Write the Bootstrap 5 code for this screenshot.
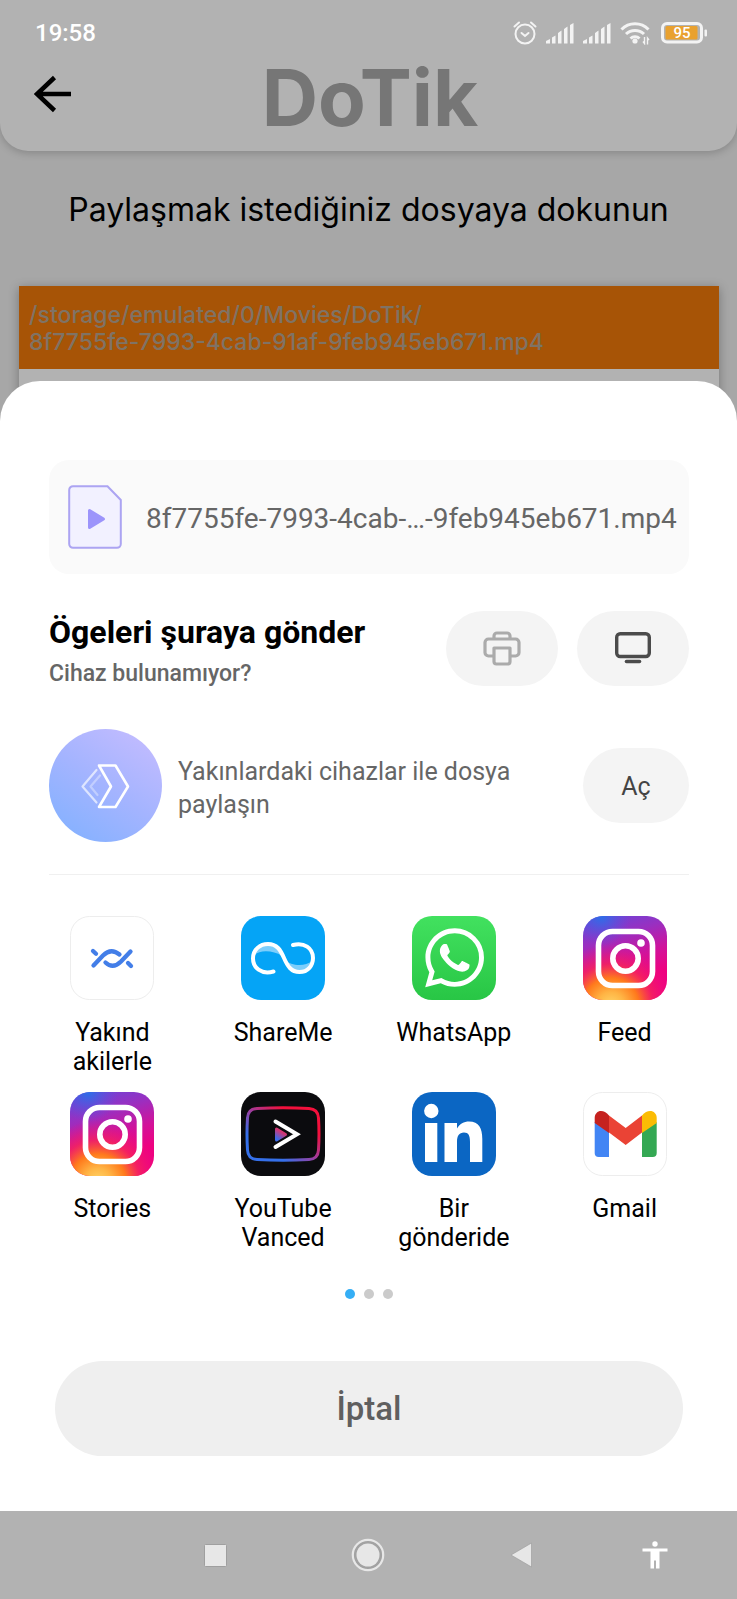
<!DOCTYPE html>
<html lang="tr">
<head>
<meta charset="utf-8">
<meta name="viewport" content="width=device-width, initial-scale=1">
<title>DoTik</title>
<link rel="stylesheet" href="https://cdn.jsdelivr.net/npm/bootstrap@5.3.0/dist/css/bootstrap.min.css">
<style>
  body { font-family: Roboto, "Liberation Sans", sans-serif; background: #a7a7a7; color: #000; }
  svg { display: block; flex-shrink: 0; }
  button { border: 0; padding: 0; }
  .app-head { background: #b2b2b2; border-radius: 0 0 28px 28px; box-shadow: 0 2px 8px rgba(0,0,0,.2); height: 151px; }
  .status { height: 66px; padding: 0 28px 0 35px; color: #fff; font-size: 24px; font-weight: 500; line-height: 28px; }
  .status-icons { gap: 9px; }
  .title-row { display: grid; grid-template-columns: 1fr auto 1fr; padding: 0 31px 0 34px; }
  .back { height: 56px; }
  .brand { font-family: Inter, "Noto Sans", sans-serif; font-weight: 700; font-size: 78px; line-height: 64px; color: #767676; }
  .hint { font-family: Inter, "Noto Sans", sans-serif; font-size: 32px; line-height: 42px; padding: 38px 20px 55px; }
  .file-card { margin: 0 18px 0 19px; background: #b2b2b2; box-shadow: 0 2px 10px rgba(0,0,0,.3); padding-bottom: 62px; }
  .file-path { background: #a75406; color: #7f7365; font-family: Inter, "Noto Sans", sans-serif; font-weight: 500; font-size: 23px; line-height: 27px; padding: 16px 10px 13px; }
  .sheet { background: #fff; border-radius: 40px 40px 0 0; margin-top: -50px; padding: 79px 0 55px; z-index: 1; }
  .inset { margin-left: 49px; margin-right: 48px; }
  .file-box { background: #fafafa; border-radius: 20px; height: 114px; padding: 0 14px 0 19px; font-size: 28px; color: #666; }
  .file-box span { padding-top: 4px; }
  .send-row { margin-top: 34px; gap: 19px; }
  .send-title { font-size: 32px; line-height: 48px; font-weight: 700; }
  .send-sub { font-size: 23px; line-height: 28px; margin-top: 4px; font-weight: 500; color: #666; }
  .pill { background: #f4f4f4; border-radius: 38px; height: 75px; color: #444; font-size: 25px; }
  .w-icon { width: 112px; }
  .w-open { width: 106px; padding-top: 2px; }
  .near { margin-top: 41px; font-size: 25px; line-height: 33px; color: #666; }
  .near-logo { width: 113px; height: 113px; border-radius: 50%; background: linear-gradient(35deg, #82b1ff 5%, #a4b4ff 50%, #c5bcff 95%); }
  .rule { height: 1px; background: #f0f0f0; margin-top: 32px; margin-bottom: 41px; }
  .apps { display: grid; grid-template-columns: repeat(4, 1fr); row-gap: 16px; margin: 0 27px; }
  .app { background: none; color: #000; font-size: 25px; line-height: 29px; gap: 18px; min-height: 160px; }
  .dots { padding-top: 37px; gap: 9px; }
  .dot { width: 10px; height: 10px; border-radius: 50%; background: #cbcbcb; }
  .dot.on { background: #35aef5; }
  .cancel { background: #efefef; border-radius: 48px; height: 95px; margin: 62px 54px 0 55px; font-size: 33px; font-weight: 500; color: #5f5f5f; }
  .nav-keys { background: #b2b2b2; height: 88px; display: grid; grid-template-columns: 10fr 11fr 11fr 11fr 10fr; }
  .nav-keys button { background: none; }
</style>
</head>
<body>
<svg width="0" height="0" class="position-absolute" aria-hidden="true">
  <defs>
    <radialGradient id="igWarm" gradientUnits="userSpaceOnUse" cx="28" cy="90" r="62">
      <stop offset="0" stop-color="#ffd76a"/><stop offset=".22" stop-color="#ffb545"/><stop offset=".45" stop-color="#ff7a1c"/><stop offset=".68" stop-color="#f5245c" stop-opacity=".8"/><stop offset="1" stop-color="#f0107c" stop-opacity="0"/>
    </radialGradient>
    <linearGradient id="igCool" x1=".2" y1="0" x2=".45" y2=".8">
      <stop offset="0" stop-color="#6a45d8"/><stop offset=".35" stop-color="#9a2fc0"/><stop offset=".7" stop-color="#d2129a"/><stop offset="1" stop-color="#ee0280"/>
    </linearGradient>
    <radialGradient id="igBlue" gradientUnits="userSpaceOnUse" cx="18" cy="0" r="30">
      <stop offset="0" stop-color="#2a70e8"/><stop offset="1" stop-color="#5a50e0" stop-opacity="0"/>
    </radialGradient>
    <linearGradient id="waGreen" x1="0" y1="0" x2="0" y2="1"><stop offset="0" stop-color="#42e15f"/><stop offset="1" stop-color="#28c645"/></linearGradient>
    <linearGradient id="ytEdge" x1="0" y1="1" x2="1" y2="0"><stop offset=".25" stop-color="#3570ea"/><stop offset=".5" stop-color="#a03c9c"/><stop offset=".75" stop-color="#f3103c"/></linearGradient>
    <linearGradient id="ytPlay" x1="0" y1="1" x2=".5" y2="0"><stop offset=".1" stop-color="#3a6bea"/><stop offset=".8" stop-color="#d23774"/></linearGradient>
  </defs>
  <symbol id="instagram" viewBox="0 0 84 84">
    <rect width="84" height="84" rx="20" fill="url(#igCool)"/>
    <rect width="84" height="84" rx="20" fill="url(#igBlue)"/>
    <rect width="84" height="84" rx="20" fill="url(#igWarm)"/>
    <g fill="none" stroke="#fff" stroke-width="5.6"><rect x="15.500" y="15.500" width="54" height="54" rx="14"/><circle cx="42.500" cy="42.500" r="12.700"/></g>
    <circle cx="58" cy="27" r="3.800" fill="#fff"/>
  </symbol>
  <symbol id="signal" viewBox="0 0 28 22"><path d="M0 21.500v-2.500l4-2v4.500zM6 15.500l3.500-2v8H6zM12 11l3.500-2.500v13H12zM18 7l3.500-2.500v17H18zM24 3l3.500-2v20.500H24z"/></symbol>
</svg>

<div class="d-flex flex-column min-vh-100">
  <header class="app-head">
    <div class="status d-flex align-items-center justify-content-between">
      <span>19:58</span>
      <div class="status-icons d-flex align-items-center" aria-hidden="true">
        <svg width="24" height="24" viewBox="0 0 24 24" fill="none" stroke="#f3f3f3" stroke-width="2" stroke-linecap="round"><circle cx="12" cy="13" r="9.500"/><path d="M8.500 12l3.500 3 3.500-3M1.500 5.500L6 1.500M22.500 5.500L18 1.500"/></svg>
        <svg width="28" height="22" fill="#f3f3f3"><use href="#signal"/></svg>
        <svg width="28" height="22" fill="#f3f3f3"><use href="#signal"/></svg>
        <svg width="32" height="24" viewBox="0 0 32 24"><g fill="none" stroke="#f3f3f3" stroke-width="3"><path d="M1.500 8.500a18.500 18.500 0 0 1 27 0M6 13a13 13 0 0 1 18 0M10.500 17.500a6.500 6.500 0 0 1 9 0"/></g><circle cx="15" cy="20" r="2.600" fill="#f3f3f3"/><path d="M24.500 16v6.500l-1.500-2M27.500 23.500V17l1.500 2" fill="none" stroke="#f3f3f3" stroke-width="1.400"/></svg>
        <svg width="48" height="22" viewBox="0 0 48 22"><rect x="1.500" y="1.500" width="39" height="18.500" rx="4.500" fill="none" stroke="#f3f3f3" stroke-width="3"/><rect x="4.500" y="4" width="32" height="13.500" rx="1.500" fill="#e9a12f"/><rect x="43.500" y="7.500" width="2.500" height="7" rx="1" fill="#f3f3f3"/><text x="21" y="16" text-anchor="middle" font-size="15" font-weight="500" fill="#fff">95</text></svg>
      </div>
    </div>
    <div class="title-row align-items-start">
      <button class="back bg-transparent d-flex align-items-center" aria-label="Geri"><svg width="38" height="38" viewBox="0 0 38 38" fill="none" stroke="#000" stroke-width="4.500"><path d="M37 19H3M20.500 2.500L3 19l17.500 16.500"/></svg></button>
      <h1 class="brand mb-0">DoTik</h1>
    </div>
  </header>

  <main class="flex-grow-1 d-flex flex-column">
    <p class="hint m-0 text-center">Paylaşmak istediğiniz dosyaya dokunun</p>
    <div class="file-card"><div class="file-path">/storage/emulated/0/Movies/DoTik/<br>8f7755fe-7993-4cab-91af-9feb945eb671.mp4</div></div>

    <section class="sheet position-relative flex-grow-1 d-flex flex-column" aria-label="Paylaş">
      <div class="inset file-box d-flex align-items-center">
        <svg width="54" height="64" viewBox="0 0 54 64"><path d="M5 1.200h34.500L52.800 15v44a3.800 3.800 0 0 1-3.800 3.800H5A3.800 3.800 0 0 1 1.200 59V5A3.800 3.800 0 0 1 5 1.200z" fill="#f2f1ff" stroke="#aca4f2" stroke-width="2"/><path d="M21.500 25.500v17l14-8.500z" fill="#9c94fb" stroke="#9c94fb" stroke-width="3" stroke-linejoin="round"/></svg>
        <span class="ms-4 text-nowrap">8f7755fe-7993-4cab-…-9feb945eb671.mp4</span>
      </div>

      <div class="inset send-row d-flex align-items-center">
        <div class="me-auto">
          <h2 class="send-title m-0">Ögeleri şuraya gönder</h2>
          <p class="send-sub mb-0">Cihaz bulunamıyor?</p>
        </div>
        <button class="pill w-icon d-flex align-items-center justify-content-center" aria-label="Yazdır"><svg width="38" height="35" viewBox="0 0 38 35" fill="none" stroke="#ababab" stroke-width="3.200" stroke-linejoin="round"><path d="M11 8V5a3 3 0 0 1 3-3h10a3 3 0 0 1 3 3v3M11 25H5.500a3.500 3.500 0 0 1-3.500-3.500v-10A3.500 3.500 0 0 1 5.500 8h27a3.500 3.500 0 0 1 3.500 3.500v10a3.500 3.500 0 0 1-3.500 3.500H27"/><path d="M11 17h16v13.500a2.500 2.500 0 0 1-2.500 2.500h-11a2.500 2.500 0 0 1-2.500-2.500z"/></svg></button>
        <button class="pill w-icon d-flex align-items-center justify-content-center" aria-label="Ekrana yansıt"><svg width="36" height="32" viewBox="0 0 36 32"><rect x="1.700" y="1.700" width="32.600" height="22.800" rx="3.500" fill="none" stroke="#4b4b4b" stroke-width="3.400"/><path d="M11.500 29.500h13" stroke="#4b4b4b" stroke-width="3.600" stroke-linecap="round"/></svg></button>
      </div>

      <div class="inset near d-flex align-items-center">
        <div class="near-logo flex-shrink-0 me-3"><svg width="113" height="113" viewBox="0 0 113 113" fill="none" stroke="#fff" stroke-linejoin="round" stroke-linecap="round"><path d="M50 36.500h16.500L79 57.500 66.500 78H50l12-20.500z" stroke-width="2.600"/><path d="M47.500 41L33.500 57.500l14 16" stroke-width="2.200" opacity=".65"/><path d="M51 46.500L41.500 57.500l7 8.500" stroke-width="2.200" opacity=".35"/></svg></div>
        <span class="me-auto pt-1">Yakınlardaki cihazlar ile dosya<br>paylaşın</span>
        <button class="pill w-open">Aç</button>
      </div>

      <div class="inset rule"></div>

      <div class="apps">
        <button class="app d-flex flex-column align-items-center">
          <svg width="84" height="84" viewBox="0 0 84 84" fill="none"><rect x=".5" y=".5" width="83" height="83" rx="19" fill="#fff" stroke="#ededed"/><g stroke="#437ee8" stroke-width="4.300" stroke-linecap="round"><path d="M23.500 49.500L33 39.500Q41 31.500 49.500 38.500M35.500 46.500Q43 53.500 51 45.500L60.500 35.500M23 35l3 2.800M58 47l3 3"/></g></svg>
          <span>Yakınd<br>akilerle</span></button>
        <button class="app d-flex flex-column align-items-center">
          <svg width="84" height="84" viewBox="0 0 84 84" fill="none"><rect width="84" height="84" rx="20" fill="#05a4f6"/><path d="M14 39C18 34 32 34 41 40C37 31 33 28 27 28S15 32 14 39z" fill="#7dcefb"/><path d="M44 44C50 50 64 51 71 45C70 52 65 56 58 56S48 52 44 44z" fill="#7dcefb"/><path d="M32.500 55.500C20 59 12 51.500 12 42.500C12 33.500 19 28 27 28C36 28 39.500 34 43 42C46.500 50 50 56 58.500 56C67 56 72 49.500 72 42C72 32 63 26 52 29" stroke="#fff" stroke-width="4" stroke-linecap="round"/></svg>
          <span>ShareMe</span></button>
        <button class="app d-flex flex-column align-items-center">
          <svg width="84" height="84" viewBox="0 0 84 84"><rect width="84" height="84" rx="20" fill="url(#waGreen)"/><g transform="translate(13.200 12.300) scale(3.690)" fill="#fff"><path d="M13.601 2.326A7.850 7.850 0 0 0 7.994 0C3.627 0 .068 3.558.064 7.926c0 1.399.366 2.760 1.057 3.965L0 16l4.204-1.102a7.900 7.900 0 0 0 3.790.965h.004c4.368 0 7.926-3.558 7.930-7.930A7.900 7.900 0 0 0 13.600 2.326zM7.994 14.521a6.600 6.600 0 0 1-3.356-.920l-.240-.144-2.494.654.666-2.433-.156-.251a6.560 6.560 0 0 1-1.007-3.505c0-3.626 2.957-6.584 6.591-6.584a6.560 6.560 0 0 1 4.660 1.931 6.560 6.560 0 0 1 1.928 4.660c-.004 3.639-2.961 6.592-6.592 6.592m3.615-4.934c-.197-.099-1.170-.578-1.353-.646-.182-.065-.315-.099-.445.099-.133.197-.513.646-.627.775-.114.133-.232.148-.430.050-.197-.100-.836-.308-1.592-.985-.590-.525-.985-1.175-1.103-1.372-.114-.198-.011-.304.088-.403.087-.088.197-.232.296-.346.100-.114.133-.198.198-.330.065-.134.034-.248-.015-.347-.050-.099-.445-1.076-.612-1.470-.160-.389-.323-.335-.445-.340-.114-.007-.247-.007-.380-.007a.730.730 0 0 0-.529.247c-.182.198-.691.677-.691 1.654s.710 1.916.810 2.049c.098.133 1.394 2.132 3.383 2.992.470.205.840.326 1.129.418.475.152.904.129 1.246.080.380-.058 1.171-.480 1.338-.943.164-.464.164-.860.114-.943-.049-.084-.182-.133-.380-.232"/></g></svg>
          <span>WhatsApp</span></button>
        <button class="app d-flex flex-column align-items-center">
          <svg width="84" height="84"><use href="#instagram"/></svg>
          <span>Feed</span></button>
        <button class="app d-flex flex-column align-items-center">
          <svg width="84" height="84"><use href="#instagram"/></svg>
          <span>Stories</span></button>
        <button class="app d-flex flex-column align-items-center">
          <svg width="84" height="84" viewBox="0 0 84 84" fill="none"><rect width="84" height="84" rx="20" fill="#0b0b0e"/><path d="M16 16.500Q42 15 68 16.500Q77 17 77.500 26Q78.500 42 77.500 58Q77 67 68 67.500Q42 69 16 67.500Q7 67 6.500 58Q5.500 42 6.500 26Q7 17 16 16.500z" stroke="url(#ytEdge)" stroke-width="3"/><path d="M35.500 37v11l9-5.500z" fill="url(#ytPlay)" stroke="url(#ytPlay)" stroke-width="3" stroke-linejoin="round"/><path d="M34.500 29.500L56 42.300 34.500 55" stroke="#fff" stroke-width="4" stroke-linecap="round"/></svg>
          <span>YouTube<br>Vanced</span></button>
        <button class="app d-flex flex-column align-items-center">
          <svg width="84" height="84" viewBox="0 0 84 84" fill="#fff"><rect width="84" height="84" rx="20" fill="#0b66c3"/><circle cx="19.300" cy="19" r="7.200"/><rect x="13" y="31" width="12.300" height="39"/><path d="M45 31v5.500c2.500-4.500 7-7 12-7 10 0 13.300 6.500 13.300 17.500v23H58V50c0-6.500-1.500-9.500-6-9.500-5 0-7 3.500-7 9.500v20H32.500V31z"/></svg>
          <span>Bir<br>gönderide</span></button>
        <button class="app d-flex flex-column align-items-center">
          <svg width="84" height="84" viewBox="0 0 84 84"><rect x=".5" y=".5" width="83" height="83" rx="19" fill="#fff" stroke="#ededed"/><path d="M11.700 30v31a4 4 0 0 0 4 4H26V40z" fill="#4285f4"/><path d="M73.700 30v31a4 4 0 0 1-4 4H59V40z" fill="#34a853"/><path d="M26 23.500l16.700 12.500L59 23.500v17L42.700 53 26 40.500z" fill="#ea4335"/><path d="M26 23.500C20 16 11.700 18.500 11.700 26v5L26 41z" fill="#c5221f"/><path d="M59 23.500C65 16 73.700 18.500 73.700 26v5L59 41z" fill="#fbbc04"/></svg>
          <span>Gmail</span></button>
      </div>

      <div class="dots d-flex justify-content-center" aria-hidden="true">
        <span class="dot on"></span><span class="dot"></span><span class="dot"></span>
      </div>

      <button class="cancel">İptal</button>
    </section>
  </main>

  <nav class="nav-keys" aria-label="Sistem">
    <span></span>
    <button class="d-flex align-items-center justify-content-center" aria-label="Son uygulamalar"><svg width="23" height="23"><rect x=".5" y=".5" width="22" height="22" rx="1" fill="#e7e7e7" stroke="#9f9f9f"/></svg></button>
    <button class="d-flex align-items-center justify-content-center" aria-label="Ana ekran"><svg width="34" height="34"><circle cx="17" cy="17" r="15.200" fill="#a2a2a2" stroke="#e7e7e7" stroke-width="2.200"/><circle cx="17" cy="17" r="11.500" fill="#e7e7e7"/></svg></button>
    <button class="d-flex align-items-center justify-content-center" aria-label="Geri"><svg width="22" height="26" viewBox="0 0 22 26"><path d="M21.500 1v24L1 13z" fill="#e7e7e7" stroke="#9f9f9f" stroke-width=".7"/></svg></button>
    <button class="d-flex align-items-center justify-content-center pe-4" aria-label="Erişilebilirlik"><svg width="26" height="28" viewBox="0 0 26 28" fill="#fff"><circle cx="13" cy="3" r="2.700"/><path d="M.5 7.500h25v3H17.500V27.500h-3.500v-8h-2v8H8.500v-17H.5z"/></svg></button>
  </nav>
</div>
<script src="https://cdn.jsdelivr.net/npm/bootstrap@5.3.0/dist/js/bootstrap.bundle.min.js"></script>
</body>
</html>
